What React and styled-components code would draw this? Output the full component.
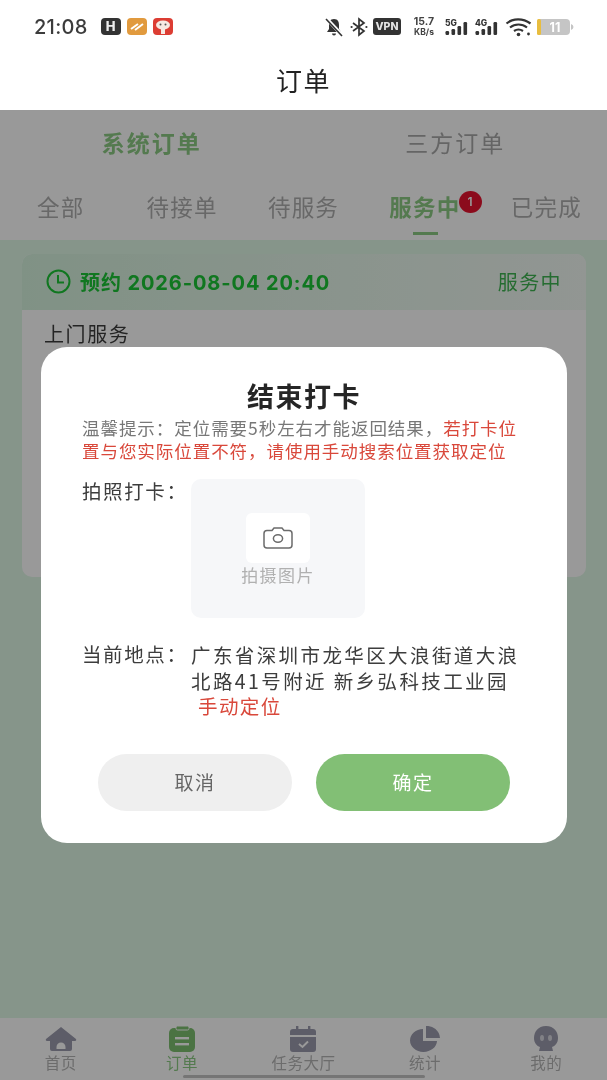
import React from 'react'
import styled, { createGlobalStyle } from 'styled-components'

const GlobalStyle = createGlobalStyle`
  html, body {
    margin: 0;
    padding: 0;
    background: #fff;
    font-family: "Noto Sans CJK SC", "Noto Sans", sans-serif;
  }
  * { box-sizing: border-box; }
`

const Screen = styled.div`
  position: relative;
  width: 607px;
  height: 1080px;
  overflow: hidden;
  display: flex;
  flex-direction: column;
  background: #dff8e6;
  filter: blur(0.4px);
`

const StatusBar = styled.div`
  height: 50px;
  flex: none;
  background: #fff;
  padding: 3px 33px 0 34px;
  display: flex;
  align-items: center;
  justify-content: space-between;
  color: #2f2f2f;
`

const StatusGroup = styled.div`
  display: flex;
  align-items: center;
  gap: ${({ $gap }) => $gap}px;
`

const Clock = styled.span`
  font-family: Inter, sans-serif;
  font-size: 20px;
  font-weight: 500;
  letter-spacing: 0.3px;
  margin-right: 7px;
  color: #3c3c3c;
`

const AppBadge = styled.span`
  width: 20px;
  height: 17px;
  border-radius: 4px;
  background: ${({ $color }) => $color};
  display: flex;
  align-items: center;
  justify-content: center;
  color: #eee;
  font-family: Inter, sans-serif;
  font-weight: 800;
  font-size: 13px;
  line-height: 1;
`

const VpnTag = styled.span`
  width: 28px;
  height: 17px;
  border-radius: 3px;
  background: #333;
  color: #e4e4e4;
  font-family: Inter, sans-serif;
  font-weight: 800;
  font-size: 10.5px;
  display: flex;
  align-items: center;
  justify-content: center;
`

const Speed = styled.span`
  width: 24px;
  margin: 0 4px 0 6px;
  font-family: Inter, sans-serif;
  font-weight: 700;
  font-size: 10.5px;
  line-height: 10px;
  text-align: center;
  color: #444;
  white-space: nowrap;
  & small {
    display: block;
    font-size: 8.5px;
  }
`

const NavBar = styled.div`
  height: 60px;
  flex: none;
  background: #fff;
  display: flex;
  align-items: center;
  justify-content: center;
  font-size: 26px;
  letter-spacing: 1.5px;
  color: #222;
  padding-bottom: 2px;
`

const TabsPanel = styled.div`
  flex: none;
  height: 130px;
  background: #fff;
`

const SourceTabs = styled.div`
  height: 66px;
  padding-bottom: 3px;
  display: grid;
  grid-template-columns: 1fr 1fr;
  align-items: center;
  text-align: center;
`

const SourceTab = styled.div`
  font-size: 23px;
  letter-spacing: 2px;
  font-weight: ${({ $active }) => ($active ? 700 : 400)};
  color: ${({ $active }) => ($active ? '#8dcb84' : '#a9a9a9')};
`

const StatusTabs = styled.div`
  height: 64px;
  display: grid;
  grid-template-columns: repeat(5, 1fr);
  text-align: center;
`

const StatusTab = styled.div`
  position: relative;
  padding-top: 12px;
  font-size: 22.5px;
  line-height: 36px;
  letter-spacing: 1.2px;
  font-weight: ${({ $active }) => ($active ? 700 : 400)};
  color: ${({ $active }) => ($active ? '#8dcb84' : '#adadad')};
  &::after {
    content: '';
    display: ${({ $active }) => ($active ? 'block' : 'none')};
    position: absolute;
    left: 50%;
    bottom: 5px;
    width: 25px;
    height: 3px;
    margin-left: -12px;
    background: #8dcb84;
  }
`

const CountBadge = styled.span`
  position: absolute;
  top: 15px;
  right: 4px;
  width: 23px;
  height: 22px;
  border-radius: 50%;
  background: #e8132f;
  color: #fff;
  font-family: Inter, sans-serif;
  font-size: 12px;
  font-weight: 600;
  line-height: 21px;
  letter-spacing: 0;
`

const Content = styled.div`
  flex: 1;
  padding: 14px 21px 0 22px;
`

const OrderCard = styled.div`
  height: 323px;
  border-radius: 10px;
  overflow: hidden;
  background: #fff;
`

const CardHeader = styled.div`
  height: 56px;
  padding: 0 24px 2px;
  display: flex;
  align-items: center;
  background: linear-gradient(90deg, #d6f3de, #f3faf5);
`

const ClockIcon = styled.svg`
  width: 25px;
  height: 25px;
  flex: none;
  margin-right: 9px;
`

const Appointment = styled.span`
  flex: 1;
  font-family: Inter, "Noto Sans CJK SC", sans-serif;
  font-size: 20px;
  font-weight: 700;
  letter-spacing: 0.9px;
  color: #1cc636;
  white-space: nowrap;
`

const CardState = styled.span`
  font-size: 20px;
  letter-spacing: 1.4px;
  color: #3fb552;
`

const CardBody = styled.div`
  padding: 9px 22px;
  font-size: 20px;
  line-height: 30px;
  letter-spacing: 1.6px;
  color: #3d3d3d;
`

const TabBar = styled.div`
  position: relative;
  flex: none;
  height: 62px;
  background: #fff;
  display: grid;
  grid-template-columns: repeat(5, 1fr);
  text-align: center;
`

const TabItem = styled.div`
  padding-top: 8px;
  font-size: 15.5px;
  line-height: 18px;
  letter-spacing: 0.5px;
  color: ${({ $active }) => ($active ? '#8dcb84' : '#b5b5b5')};
  display: flex;
  flex-direction: column;
  align-items: center;
  gap: 1px;
`

const TabIcon = styled.svg`
  width: 32px;
  height: 26px;
`

const HomeIndicator = styled.div`
  position: absolute;
  left: 183px;
  bottom: 2px;
  width: 242px;
  height: 3px;
  border-radius: 2px;
  background: #c4c4c4;
`

const Overlay = styled.div`
  position: absolute;
  left: 0;
  right: 0;
  top: 110px;
  bottom: 0;
  background: rgba(0, 0, 0, 0.4);
  display: flex;
  align-items: center;
  justify-content: center;
`

const Modal = styled.div`
  width: 526px;
  height: 496px;
  margin-left: 1px;
  padding: 29px 41px 0;
  border-radius: 26px;
  background: #fff;
`

const ModalTitle = styled.div`
  height: 40px;
  line-height: 40px;
  font-size: 27px;
  font-weight: 700;
  text-align: center;
  letter-spacing: 1.5px;
  color: #262626;
`

const Notice = styled.div`
  font-size: 17.5px;
  line-height: 23px;
  letter-spacing: 0.95px;
  color: #777;
  white-space: nowrap;
  & em {
    font-style: normal;
    color: #d9483b;
  }
`

const PhotoRow = styled.div`
  display: flex;
  margin-top: 17px;
`

const FieldLabel = styled.div`
  flex: none;
  width: 109px;
  font-size: 19.5px;
  line-height: 24px;
  letter-spacing: 1.6px;
  color: #3d3d3d;
`

const PhotoBox = styled.div`
  width: 174px;
  height: 139px;
  padding-top: 34px;
  border-radius: 10px;
  background: #f6f7f9;
  display: flex;
  flex-direction: column;
  align-items: center;
`

const CameraTile = styled.div`
  width: 64px;
  height: 50px;
  border-radius: 6px;
  background: #fff;
  display: flex;
  align-items: center;
  justify-content: center;
`

const PhotoHint = styled.div`
  font-size: 17px;
  line-height: 24px;
  letter-spacing: 1.4px;
  color: #b0b0b0;
`

const AddressRow = styled.div`
  display: flex;
  margin-top: 24px;
`

const AddressLines = styled.div`
  font-size: 19.5px;
  line-height: 26px;
  letter-spacing: 2.4px;
  color: #3d3d3d;
  white-space: nowrap;
`

const ManualLink = styled.div`
  padding-left: 7px;
  margin-top: -1px;
  letter-spacing: 1.4px;
  color: #d9483b;
`

const ButtonRow = styled.div`
  display: flex;
  gap: 24px;
  margin-top: 35px;
  padding: 0 16px;
`

const ActionButton = styled.div`
  width: 194px;
  height: 57px;
  padding-bottom: 3px;
  border-radius: 29px;
  display: flex;
  align-items: center;
  justify-content: center;
  font-size: 19px;
  letter-spacing: 1.5px;
  background: ${({ $primary }) => ($primary ? '#82bf75' : '#efefef')};
  color: ${({ $primary }) => ($primary ? '#fff' : '#666')};
`

const SignalIcon = ({ label }) => (
  <svg width="25" height="18" viewBox="0 0 25 18">
    <text x="0" y="7.5" fontFamily="Inter, sans-serif" fontWeight="800" fontSize="8.5" fill="#333">{label}</text>
    <rect x="0.5" y="13" width="3.6" height="4" rx="1.2" fill="#333" />
    <rect x="6.5" y="11" width="3.6" height="6" rx="1.2" fill="#333" />
    <rect x="12.5" y="8" width="3.6" height="9" rx="1.2" fill="#333" />
    <rect x="18.5" y="4" width="3.6" height="13" rx="1.2" fill="#333" />
  </svg>
)

const tabs = [
  {
    label: '首页',
    icon: (
      <>
        <path d="M16 1 L31 13 Q32 15 29 15 L27 15 L27 23 Q27 25 25 25 L7 25 Q5 25 5 23 L5 15 L3 15 Q0 15 1 13 Z" fill="#9b9bad" />
        <path d="M11.5 21 A4.5 4.5 0 0 1 20.5 21 V23 H11.5 Z" fill="#fff" />
      </>
    ),
  },
  {
    label: '订单',
    active: true,
    icon: (
      <>
        <rect x="3" y="2" width="26" height="24" rx="5" fill="#7dc070" />
        <rect x="10" y="0" width="13" height="4" rx="1.5" fill="#7dc070" stroke="#fff" strokeWidth="1" />
        <rect x="9" y="11" width="14" height="2.4" fill="#fff" />
        <rect x="9" y="17" width="14" height="2.4" fill="#fff" />
      </>
    ),
  },
  {
    label: '任务大厅',
    icon: (
      <>
        <path d="M6 3 H26 Q29 3 29 6 V9 H3 V6 Q3 3 6 3 Z" fill="#9b9bad" />
        <path d="M3 11 H29 V23 Q29 26 26 26 H6 Q3 26 3 23 Z" fill="#9b9bad" />
        <rect x="9" y="0" width="2.4" height="5" fill="#9b9bad" />
        <rect x="21" y="0" width="2.4" height="5" fill="#9b9bad" />
        <path d="M12 18 L15.5 21 L21 15.5" fill="none" stroke="#fff" strokeWidth="2" />
      </>
    ),
  },
  {
    label: '统计',
    icon: (
      <>
        <path d="M14 3 V15 H28 A13.5 11.5 0 1 1 14 3 Z" fill="#9b9bad" />
        <path d="M17 0 A13 13 0 0 1 31 12 H17 Z" fill="#9b9bad" />
      </>
    ),
  },
  {
    label: '我的',
    icon: (
      <>
        <path d="M16 0 C24 0 28 6 28 12 C28 17 25 20 22 21 L23 25 H9 L10 21 C7 20 4 17 4 12 C4 6 8 0 16 0 Z" fill="#9b9bad" />
        <ellipse cx="12" cy="12" rx="2" ry="3" fill="#d8d8e0" />
        <ellipse cx="20" cy="12" rx="2" ry="3" fill="#d8d8e0" />
      </>
    ),
  },
]

const orderStates = ['全部', '待接单', '待服务', '服务中', '已完成']

export default function App() {
  return (
    <Screen>
      <GlobalStyle />
      <StatusBar>
        <StatusGroup $gap={6}>
          <Clock>21:08</Clock>
          <AppBadge $color="#333">H</AppBadge>
          <AppBadge $color="#e19a3e">
            <svg width="16" height="11" viewBox="0 0 16 11">
              <path d="M2 8 L9 3 M6 9 L14 3" stroke="#fff" strokeWidth="2" />
            </svg>
          </AppBadge>
          <AppBadge $color="#dc3d33">
            <svg width="18" height="15" viewBox="0 0 18 15">
              <ellipse cx="9" cy="6" rx="7" ry="4.5" fill="#f6e9e2" />
              <circle cx="6.5" cy="5.5" r="1" fill="#555" />
              <circle cx="11.5" cy="5.5" r="1" fill="#555" />
              <rect x="7" y="10" width="4" height="5" fill="#f6e9e2" />
            </svg>
          </AppBadge>
        </StatusGroup>
        <StatusGroup $gap={5}>
          <svg width="20" height="20" viewBox="0 0 20 20">
            <path d="M10 2 C6 2 5 5 5 8 V12 L3 15 H17 L15 12 V8 C15 5 14 2 10 2 Z" fill="#333" />
            <path d="M8 16.5 A2 2 0 0 0 12 16.5 Z" fill="#333" />
            <path d="M2 1 L18 18" stroke="#fff" strokeWidth="3.4" />
            <path d="M2 2 L18 19" stroke="#333" strokeWidth="1.6" />
          </svg>
          <svg width="18" height="20" viewBox="0 0 18 20" style={{ marginLeft: 1 }}>
            <path d="M3 6 L14 14 L9 18 V2 L14 6 L3 14" fill="none" stroke="#333" strokeWidth="1.7" />
            <circle cx="1.6" cy="10" r="1.1" fill="#333" />
            <circle cx="16.4" cy="10" r="1.1" fill="#333" />
          </svg>
          <VpnTag>VPN</VpnTag>
          <Speed>15.7<small>KB/s</small></Speed>
          <SignalIcon label="5G" />
          <SignalIcon label="4G" />
          <svg width="27" height="20" viewBox="0 0 27 20">
            <path d="M1.5 6.5 C8 1 18 1 25.5 6.5" fill="none" stroke="#333" strokeWidth="2.2" />
            <path d="M5 10.5 C10 6.5 17 6.5 22 10.5" fill="none" stroke="#333" strokeWidth="2.2" />
            <path d="M9 14 C12 12 15 12 18 14" fill="none" stroke="#333" strokeWidth="2.2" />
            <circle cx="13.5" cy="17.5" r="1.8" fill="#333" />
            <circle cx="23.5" cy="17" r="1.4" fill="#333" />
          </svg>
          <svg width="37" height="18" viewBox="0 0 37 18">
            <rect x="0" y="1" width="33" height="16" rx="4" fill="#c5c5c5" />
            <rect x="0" y="1" width="4" height="16" rx="1.5" fill="#e8bd3f" />
            <path d="M34 6 Q36.5 7 36.5 9 Q36.5 11 34 12 Z" fill="#c5c5c5" />
            <text x="18" y="14" textAnchor="middle" fontFamily="Inter, sans-serif" fontWeight="700" fontSize="12.5" fill="#fff">11</text>
          </svg>
        </StatusGroup>
      </StatusBar>

      <NavBar>订单</NavBar>

      <TabsPanel>
        <SourceTabs>
          <SourceTab $active>系统订单</SourceTab>
          <SourceTab>三方订单</SourceTab>
        </SourceTabs>
        <StatusTabs>
          {orderStates.map((state) => (
            <StatusTab key={state} $active={state === '服务中'}>
              {state}
              {state === '服务中' && <CountBadge>1</CountBadge>}
            </StatusTab>
          ))}
        </StatusTabs>
      </TabsPanel>

      <Content>
        <OrderCard>
          <CardHeader>
            <ClockIcon viewBox="0 0 25 25">
              <circle cx="12.5" cy="12.5" r="11" fill="none" stroke="#1cc636" strokeWidth="2" />
              <path d="M12 6 V13.5 H18" fill="none" stroke="#1cc636" strokeWidth="2" />
            </ClockIcon>
            <Appointment>预约 2026-08-04 20:40</Appointment>
            <CardState>服务中</CardState>
          </CardHeader>
          <CardBody>上门服务</CardBody>
        </OrderCard>
      </Content>

      <TabBar>
        {tabs.map((tab) => (
          <TabItem key={tab.label} $active={tab.active}>
            <TabIcon viewBox="0 0 32 26">{tab.icon}</TabIcon>
            {tab.label}
          </TabItem>
        ))}
        <HomeIndicator />
      </TabBar>

      <Overlay>
        <Modal>
          <ModalTitle>结束打卡</ModalTitle>
          <Notice>
            温馨提示：定位需要5秒左右才能返回结果，<em>若打卡位</em>
            <br />
            <em>置与您实际位置不符，请使用手动搜索位置获取定位</em>
          </Notice>
          <PhotoRow>
            <FieldLabel>拍照打卡：</FieldLabel>
            <PhotoBox>
              <CameraTile>
                <svg width="30" height="22" viewBox="0 0 30 22">
                  <path d="M9 3.5 L11 1 H19 L21 3.5 H26 Q29 3.5 29 6.5 V18 Q29 21 26 21 H4 Q1 21 1 18 V6.5 Q1 3.5 4 3.5 Z" fill="none" stroke="#6b6b6b" strokeWidth="1.5" />
                  <ellipse cx="15" cy="11.5" rx="4.6" ry="3.8" fill="none" stroke="#6b6b6b" strokeWidth="1.5" />
                </svg>
              </CameraTile>
              <PhotoHint>拍摄图片</PhotoHint>
            </PhotoBox>
          </PhotoRow>
          <AddressRow>
            <FieldLabel>当前地点：</FieldLabel>
            <AddressLines>
              广东省深圳市龙华区大浪街道大浪
              <br />
              北路41号附近 新乡弘科技工业园
              <ManualLink>手动定位</ManualLink>
            </AddressLines>
          </AddressRow>
          <ButtonRow>
            <ActionButton>取消</ActionButton>
            <ActionButton $primary>确定</ActionButton>
          </ButtonRow>
        </Modal>
      </Overlay>
    </Screen>
  )
}
